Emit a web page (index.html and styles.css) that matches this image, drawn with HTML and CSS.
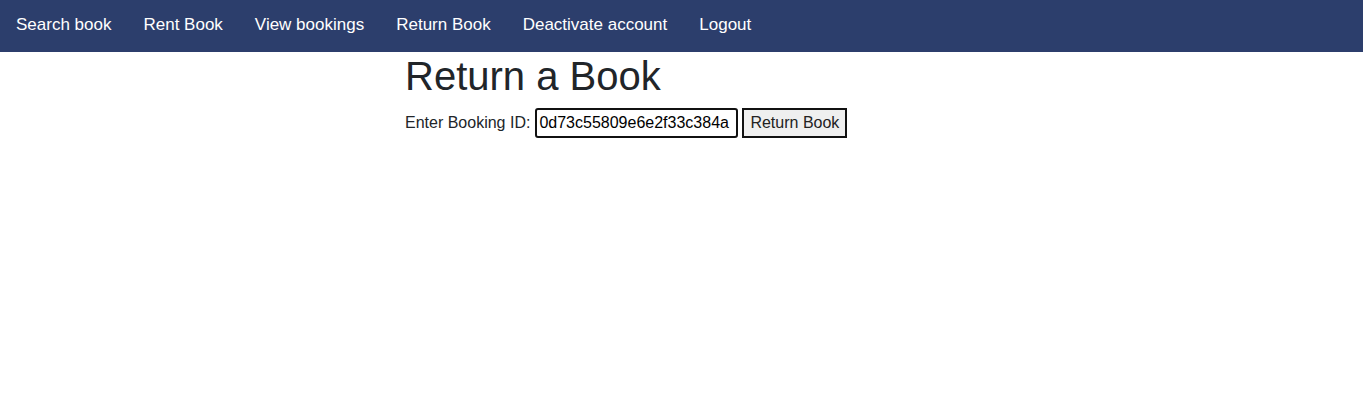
FILE: index.html
```html
<!DOCTYPE html>
<html>
<head>
<meta charset="utf-8">
<link rel="stylesheet" href="styles.css">
</head>
<body>
<nav class="nav">
  <a class="nav-link" href="#">Search book</a>
  <a class="nav-link" href="#">Rent Book</a>
  <a class="nav-link" href="#">View bookings</a>
  <a class="nav-link" href="#">Return Book</a>
  <a class="nav-link" href="#">Deactivate account</a>
  <a class="nav-link" href="#">Logout</a>
</nav>
<main class="container">
  <h1 class="title">Return a Book</h1>
  <form class="form">
    <label class="label" for="bid">Enter Booking ID:</label>
    <input class="input" id="bid" type="text" value="0d73c55809e6e2f33c384a">
    <button class="btn" type="button">Return Book</button>
  </form>
</main>
</body>
</html>
```
FILE: styles.css
```css
* { box-sizing: border-box; }
body {
  margin: 0;
  font-family: "Liberation Sans", Arial, sans-serif;
  color: #212529;
  background: #fff;
}
.nav {
  display: flex;
  align-items: center;
  height: 52px;
  padding-bottom: 2px;
  background: #2c3e6c;
}
.nav-link {
  color: #fff;
  text-decoration: none;
  font-size: 17px;
  padding: 0 16px;
}
.container {
  width: 553px;
  margin: 0 auto;
}
.title {
  font-size: 40px;
  font-weight: 400;
  margin: 0 0 8px;
  line-height: 48px;
}
.form {
  display: flex;
  align-items: center;
  gap: 4px;
  font-size: 16px;
}
.label { margin-right: 1px; }
.input {
  width: 203px;
  height: 30px;
  font-family: "Liberation Sans", Arial, sans-serif;
  font-size: 16px;
  color: #000;
  padding: 1px 2px;
  border: 2px solid #111;
  border-radius: 3px;
  outline: none;
}
.btn {
  height: 30px;
  font-family: "Liberation Sans", Arial, sans-serif;
  font-size: 16px;
  color: #222;
  background: #efefef;
  border: 2px solid #111;
  border-radius: 0;
  padding: 0 6px;
}
```
